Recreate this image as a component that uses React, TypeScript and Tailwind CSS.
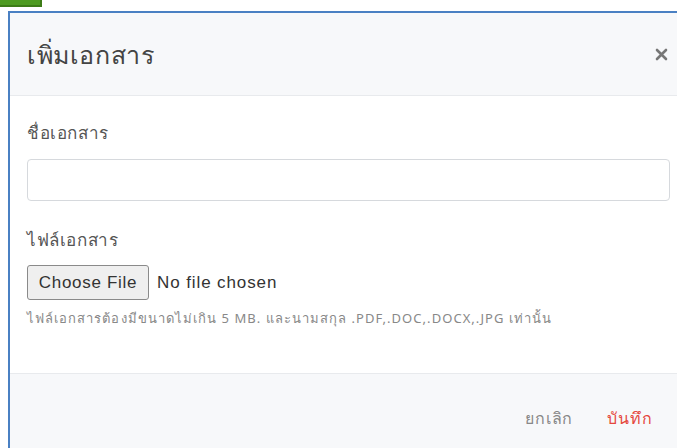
import { useState } from "react";

export default function App() {
  const [name, setName] = useState("");
  const [fileName, setFileName] = useState("");

  return (
    <div className="relative min-h-[448px] overflow-hidden bg-white font-['Noto_Sans','Liberation_Sans',sans-serif]">
      {/* tab corner peeking behind the dialog */}
      <div className="absolute left-0 top-0 h-[7px] w-[42px] border-b-2 border-r-2 border-[#3d7c17] bg-[#4e9b21]" />

      <div className="pl-[8px] pt-[11px]">
        <div className="w-[679px] border-l-2 border-t-2 border-[#4a80c3] bg-white">
          <header className="flex h-[83px] items-center justify-between border-b border-[#e8eaed] bg-[#f7f8fa] pl-[17px] pr-[19px]">
            <h2 className="text-[25px] leading-none tracking-[0.6px] text-[#444]">เพิ่มเอกสาร</h2>
            <button className="text-[#777]" aria-label="close">
              <svg width="13" height="13" viewBox="0 0 13 13">
                <path d="M2 2 L11 11 M11 2 L2 11" stroke="currentColor" strokeWidth="2.6" strokeLinecap="round" />
              </svg>
            </button>
          </header>

          <div className="px-[17px] pb-[46px] pt-[25px]">
            <label className="block text-[17px] leading-[24px] tracking-[0.6px] text-[#555]">ชื่อเอกสาร</label>
            <input
              className="mt-[14px] block h-[42px] w-full rounded-[4px] border border-[#d6d9dd] px-3 text-[15px] outline-none"
              value={name}
              onChange={(e) => setName(e.target.value)}
            />

            <label className="mt-[27px] block text-[17px] leading-[24px] tracking-[0.6px] text-[#555]">ไฟล์เอกสาร</label>
            <div className="mt-[13px] flex items-center gap-[8px] font-['Liberation_Sans',sans-serif]">
              <label className="flex h-[35px] w-[122px] cursor-pointer items-center justify-center rounded-[3px] border border-[#8a8a8a] bg-[#efefef] text-[17px] tracking-[0.7px] text-[#333]">
                Choose File
                <input
                  type="file"
                  className="hidden"
                  onChange={(e) => setFileName(e.target.files?.[0]?.name ?? "")}
                />
              </label>
              <span className="text-[17px] tracking-[0.9px] text-[#333]">{fileName || "No file chosen"}</span>
            </div>
            <p className="mt-[9px] text-[13px] leading-[18px] tracking-[1.05px] text-[#888]">
              ไฟล์เอกสารต้องมีขนาดไม่เกิน 5 MB. และนามสกุล .PDF,.DOC,.DOCX,.JPG เท่านั้น
            </p>
          </div>

          <footer className="flex h-[80px] items-start justify-end gap-[34px] border-t border-[#e8eaed] bg-[#f7f8fa] pr-[34px] pt-[32px]">
            <button className="text-[16px] leading-[24px] tracking-[0.9px] text-[#888]">ยกเลิก</button>
            <button className="text-[16px] leading-[24px] tracking-[0.9px] text-[#e5473d]">บันทึก</button>
          </footer>
        </div>
      </div>
    </div>
  );
}
